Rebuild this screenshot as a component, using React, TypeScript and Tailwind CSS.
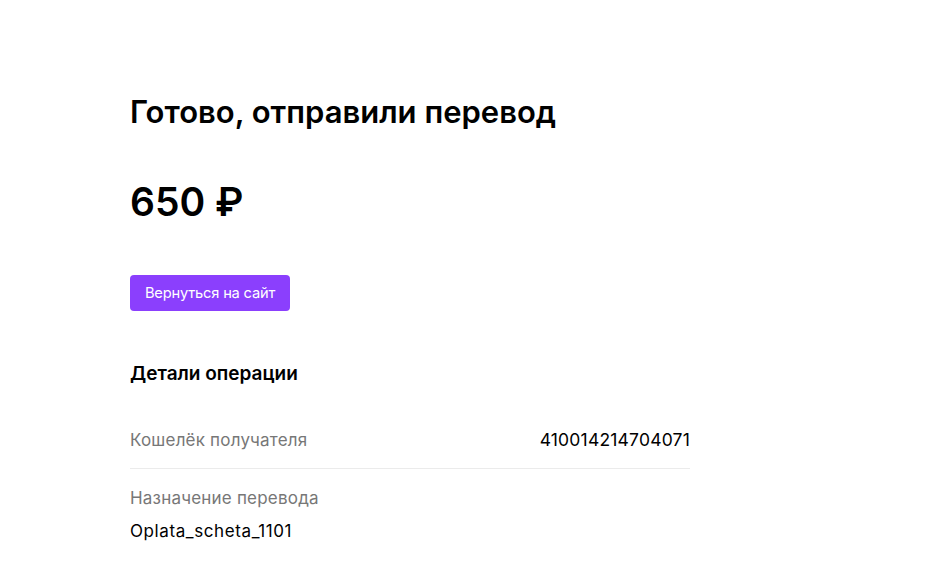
export default function App() {
  return (
    <div className="w-[949px] h-[574px] bg-white text-[#000] overflow-hidden" style={{ fontFamily: "Inter, 'Noto Sans', sans-serif" }}>
      <div className="pl-[130px] pt-[94px] w-[690px]">
        <h1 className="text-[31px] leading-[36px] font-semibold tracking-[0px]">Готово, отправили перевод</h1>
        <div className="mt-[47px] text-[39px] leading-[50px] font-semibold">650 ₽</div>
        <button className="mt-[48px] h-[36px] w-[160px] rounded-[4px] bg-[#8b3ffd] text-white text-[14.7px] tracking-[-0.2px]">Вернуться на сайт</button>
        <div className="mt-[50px] text-[19px] leading-[26px] font-semibold">Детали операции</div>
        <div className="mt-[41px] flex justify-between items-center pb-[16px] border-b border-[#ebebeb]">
          <span className="text-[17px] leading-[24px] text-[#777] tracking-[0.2px]">Кошелёк получателя</span>
          <span className="text-[17.5px] leading-[24px] tracking-[0.2px]">410014214704071</span>
        </div>
        <div className="mt-[17px] text-[17px] leading-[24px] text-[#777] tracking-[0.2px]">Назначение перевода</div>
        <div className="mt-[9px] text-[17px] leading-[24px] tracking-[0.6px]">Oplata_scheta_1101</div>
      </div>
    </div>
  );
}
